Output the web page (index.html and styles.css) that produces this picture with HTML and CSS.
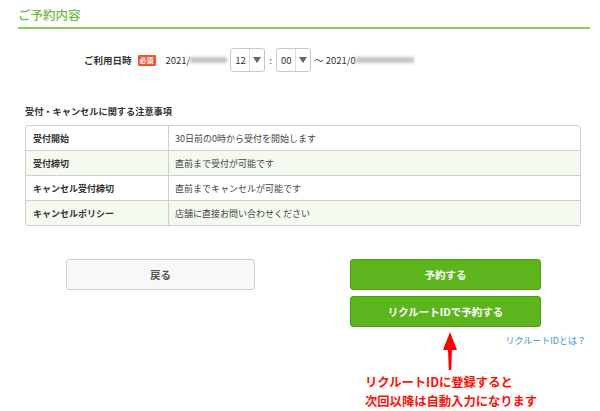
FILE: index.html
```html
<!DOCTYPE html>
<html lang="ja">
<head>
<meta charset="utf-8">
<link rel="stylesheet" href="styles.css">
</head>
<body>
<div class="page">
  <h2 class="heading">ご予約内容</h2>

  <div class="date-row">
    <span class="date-label">ご利用日時</span>
    <span class="badge">必須</span>
    <span class="date-text">2021/</span><span class="blur blur-a"></span>
    <span class="select"><span class="sel-val">12</span><span class="sel-arrow"></span></span>
    <span class="colon">:</span>
    <span class="select"><span class="sel-val">00</span><span class="sel-arrow"></span></span>
    <span class="date-text tilde">〜 2021/0</span><span class="blur blur-b"></span>
  </div>

  <div class="notes">
    <h3 class="notes-title">受付・キャンセルに関する注意事項</h3>
    <div class="table">
      <div class="row"><div class="cell-h">受付開始</div><div class="cell">30日前の0時から受付を開始します</div></div>
      <div class="row alt"><div class="cell-h">受付締切</div><div class="cell">直前まで受付が可能です</div></div>
      <div class="row"><div class="cell-h">キャンセル受付締切</div><div class="cell">直前までキャンセルが可能です</div></div>
      <div class="row alt"><div class="cell-h">キャンセルポリシー</div><div class="cell">店舗に直接お問い合わせください</div></div>
    </div>
  </div>

  <div class="actions">
    <div class="btn btn-back">戻る</div>
    <div class="right-col">
      <div class="btn btn-green">予約する</div>
      <div class="btn btn-green">リクルートIDで予約する</div>
      <div class="link-row"><span class="link">リクルートIDとは？</span></div>
    </div>
  </div>

  <svg class="arrow" width="20" height="42" viewBox="0 0 20 42">
    <polygon points="10,0 17,18 12,18 11.2,38 8.8,38 8,18 3,18" fill="#f00"/>
  </svg>
  <div class="annotation">
    <div>リクルートIDに登録すると</div>
    <div>次回以降は自動入力になります</div>
  </div>
</div>
</body>
</html>
```
FILE: styles.css
```css
html, body {
  margin: 0;
  padding: 0;
  background: #fff;
}
body {
  font-family: "Noto Sans CJK JP", "Noto Sans", sans-serif;
  color: #333;
  width: 600px;
  height: 411px;
  overflow: hidden;
}
.page {
  position: relative;
  padding: 0 10px 0 18px;
  height: 411px;
}
.heading {
  margin: 0;
  padding-top: 5px;
  padding-bottom: 2px;
  font-size: 12.5px;
  line-height: 20px;
  font-weight: 500;
  color: #6cbd3b;
  border-bottom: 2px solid #8ccb5b;
}
.date-row {
  display: flex;
  align-items: center;
  margin-top: 19px;
  margin-left: 66px;
  height: 24px;
  font-size: 9.5px;
}
.date-label {
  font-weight: bold;
  font-size: 9.5px;
  color: #333;
}
.badge {
  margin-left: 6px;
  background: #ef5236;
  color: #fff;
  font-size: 7px;
  font-weight: bold;
  padding: 0 2px;
  line-height: 11px;
  height: 11px;
  border-radius: 1px;
}
.date-text {
  margin-left: 10px;
  color: #333;
}
.tilde {
  margin-left: 3px;
}
.blur {
  display: inline-block;
  height: 6px;
  background: #c4c4c4;
  filter: blur(1.5px);
}
.blur-a {
  width: 37px;
  margin-right: 3px;
}
.blur-b {
  width: 58px;
}
.select {
  display: flex;
  align-items: center;
  width: 33px;
  height: 22px;
  border: 1px solid #c8c8c8;
  border-radius: 3px;
  background: #fff;
}
.sel-val {
  width: 19px;
  padding-left: 4px;
  box-sizing: border-box;
  font-size: 9.5px;
  color: #333;
  border-right: 1px solid #ddd;
  height: 22px;
  line-height: 22px;
}
.sel-arrow {
  width: 0;
  height: 0;
  margin-left: 3px;
  border-left: 4px solid transparent;
  border-right: 4px solid transparent;
  border-top: 6px solid #666;
}
.colon {
  margin: 0 4px 0 4px;
  font-size: 9.5px;
  color: #333;
}
.notes {
  margin-top: 32px;
  margin-left: 7px;
  width: 556px;
}
.notes-title {
  margin: 0 0 7px 0;
  font-size: 9.2px;
  line-height: 14px;
  font-weight: bold;
  color: #333;
}
.table {
  border: 1px solid #cfcfcf;
  border-radius: 3px;
  overflow: hidden;
}
.row {
  display: flex;
  height: 24px;
  align-items: stretch;
  font-size: 9px;
  border-top: 1px solid #cfcfcf;
}
.row:first-child {
  border-top: none;
}
.row.alt {
  background: #f4faef;
}
.cell-h {
  width: 135px;
  padding-left: 7px;
  border-right: 1px solid #cfcfcf;
  font-weight: bold;
  display: flex;
  align-items: center;
}
.cell {
  padding-left: 6px;
  display: flex;
  align-items: center;
  color: #444;
}
.actions {
  display: flex;
  margin-top: 33px;
  margin-left: 48px;
  align-items: flex-start;
}
.btn {
  box-sizing: border-box;
  height: 31px;
  border-radius: 3px;
  display: flex;
  align-items: center;
  justify-content: center;
  font-size: 10.5px;
  font-weight: bold;
}
.btn-back {
  width: 189px;
  background: #f8f8f8;
  border: 1px solid #cdcdcd;
  color: #555;
}
.right-col {
  margin-left: 95px;
  width: 236px;
  display: flex;
  flex-direction: column;
  gap: 6px;
}
.btn-green {
  width: 191px;
  background: #5cb51c;
  border: 1px solid #4f9c18;
  color: #fff;
}
.link-row {
  display: flex;
  justify-content: flex-end;
  margin-top: 1px;
}
.link {
  font-size: 9px;
  color: #3a97d6;
}
.arrow {
  position: absolute;
  left: 440px;
  top: 332px;
}
.annotation {
  position: absolute;
  left: 365px;
  top: 373px;
  font-size: 12.3px;
  line-height: 19px;
  font-weight: bold;
  color: #f3140b;
  text-shadow: 0 0 1px #fff, 1px 1px 1px #fff, -1px -1px 1px #fff, 1px -1px 1px #fff, -1px 1px 1px #fff, 1px 1px 2px #bbb;
}
```
